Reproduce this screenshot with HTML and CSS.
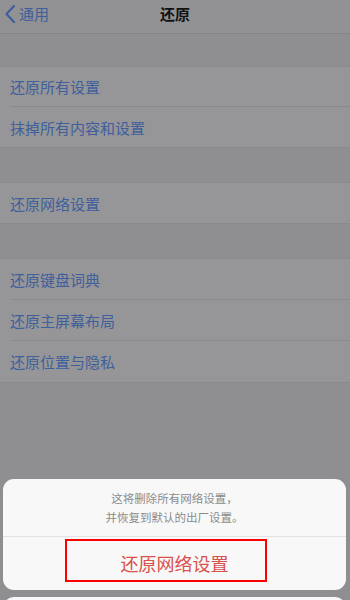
FILE: index.html
```html
<!DOCTYPE html>
<html lang="zh">
<head>
<meta charset="utf-8">
<link rel="stylesheet" href="styles.css">
</head>
<body>
<div class="screen">
  <header class="nav">
    <div class="back">
      <svg class="chev" width="12" height="20" viewBox="0 0 12 20"><path d="M10 2 L2.5 10 L10 18" fill="none" stroke="#3f5f9c" stroke-width="2.2" stroke-linecap="round" stroke-linejoin="round"/></svg>
      <span>通用</span>
    </div>
    <div class="title">还原</div>
  </header>
  <div class="gap first"></div>
  <div class="group">
    <div class="row">还原所有设置</div>
    <div class="row">抹掉所有内容和设置</div>
  </div>
  <div class="gap"></div>
  <div class="group">
    <div class="row">还原网络设置</div>
  </div>
  <div class="gap"></div>
  <div class="group tall">
    <div class="row">还原键盘词典</div>
    <div class="row">还原主屏幕布局</div>
    <div class="row">还原位置与隐私</div>
  </div>

  <div class="sheet">
    <div class="card">
      <div class="msg">这将删除所有网络设置，<br>并恢复到默认的出厂设置。</div>
      <div class="action">还原网络设置</div>
      <div class="highlight"></div>
    </div>
    <div class="card cancel"></div>
  </div>
</div>
</body>
</html>
```
FILE: styles.css
```css
* { box-sizing: border-box; margin: 0; padding: 0; }
html, body { width: 350px; height: 600px; overflow: hidden; }
body {
  background: #8f8f91;
  font-family: "Noto Sans CJK SC", "Noto Sans", sans-serif;
}
.screen { position: relative; width: 350px; height: 600px; }
.nav {
  position: relative;
  height: 34px;
  background: #929294;
  border-bottom: 1px solid #858587;
  display: flex;
  align-items: center;
}
.back {
  display: flex;
  align-items: center;
  gap: 3px;
  padding-left: 4px;
  margin-top: -6px;
  color: #3f5f9c;
  font-size: 15px;
}
.chev { display: block; }
.title {
  position: absolute;
  left: 0; right: 0; top: 3px;
  text-align: center;
  font-size: 15px;
  font-weight: 700;
  color: #111;
  line-height: 22px;
}
.gap { height: 34px; }
.gap.first { height: 32px; }
.group {
  background: #969698;
  border-top: 1px solid #8a8a8c;
  border-bottom: 1px solid #8a8a8c;
}
.row {
  height: 40px;
  display: flex;
  align-items: center;
  margin-left: 10px;
  color: #3f5f9c;
  font-size: 15px;
  border-bottom: 1px solid #8a8a8c;
}
.tall .row { height: 41px; }
.row:last-child { border-bottom: none; }
.sheet {
  position: absolute;
  left: 3px; right: 4px; top: 479px;
  display: flex;
  flex-direction: column;
  gap: 7px;
}
.card {
  position: relative;
  background: #f8f8f8;
  border-radius: 11px;
}
.msg {
  height: 58px;
  display: flex;
  align-items: center;
  justify-content: center;
  text-align: center;
  font-size: 11.5px;
  line-height: 19px;
  color: #8a8a8a;
  border-bottom: 1px solid #e2e2e2;
}
.action {
  height: 53px;
  display: flex;
  align-items: center;
  justify-content: center;
  font-size: 18px;
  color: #d8504c;
  padding-bottom: 2px;
}
.highlight {
  position: absolute;
  left: 62px; top: 60px;
  width: 202px; height: 43px;
  border: 2px solid #ff0000;
}
.cancel { height: 40px; }
```
